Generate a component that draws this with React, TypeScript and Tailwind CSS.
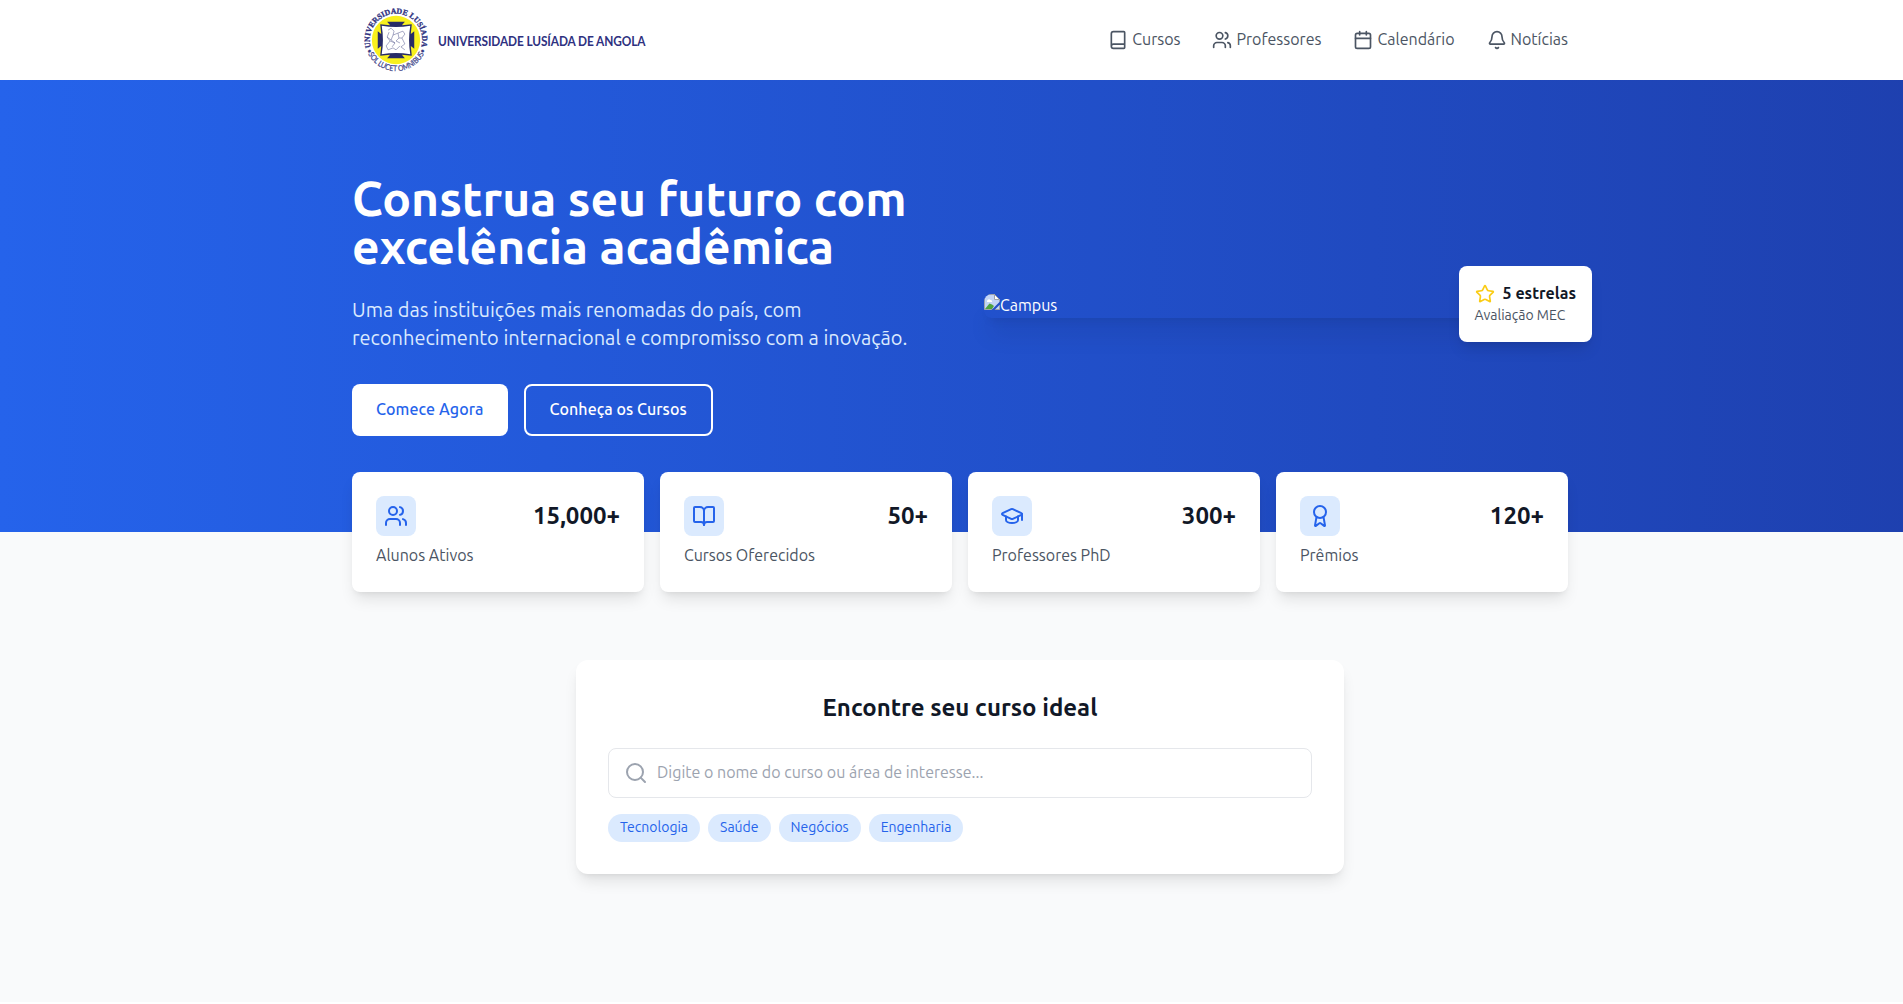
import {
  Award,
  Bell,
  Book,
  BookOpen,
  Calendar,
  GraduationCap,
  Search,
  Star,
  Users,
} from "lucide-react";

const navItems = [
  { label: "Cursos", icon: Book },
  { label: "Professores", icon: Users },
  { label: "Calendário", icon: Calendar },
  { label: "Notícias", icon: Bell },
];

const stats = [
  { label: "Alunos Ativos", value: "15,000+", icon: Users },
  { label: "Cursos Oferecidos", value: "50+", icon: BookOpen },
  { label: "Professores PhD", value: "300+", icon: GraduationCap },
  { label: "Prêmios", value: "120+", icon: Award },
];

const areas = ["Tecnologia", "Saúde", "Negócios", "Engenharia"];

function Seal() {
  return (
    <svg width="70" height="70" viewBox="-35.500 -35.500 71 71" className="shrink-0">
      <defs>
        <path id="seal-top" d="M -25.2 8.5 A 26.6 26.6 0 1 1 25.2 8.5" />
        <path id="seal-bottom" d="M -30.2 9.5 A 31.7 31.7 0 0 0 30.2 9.5" />
      </defs>
      <circle r="24.5" fill="#f8f01e" />
      <text
        fill="#2e3180"
        stroke="#2e3180"
        strokeWidth="0.3"
        fontFamily="Liberation Serif, serif"
        fontWeight="700"
        fontSize="8"
      >
        <textPath href="#seal-top" textLength="98" lengthAdjust="spacingAndGlyphs" startOffset="1">
          UNIVERSIDADE LUSÍADA
        </textPath>
      </text>
      <text
        fill="#3a3d86"
        stroke="#3a3d86"
        strokeWidth="0.2"
        fontFamily="Lato, sans-serif"
        fontSize="8"
      >
        <textPath href="#seal-bottom" textLength="78" lengthAdjust="spacingAndGlyphs" startOffset="1">
          •SOL LUCET OMNIBUS•
        </textPath>
      </text>
      <path
        d="M-9 -18.500 H9 L6 -15 L16 -16 L15 -6 L18.500 -9 V9 L15 6 L16 16 L6 15 L9 18.500 H-9 L-6 15 L-16 16 L-15 6 L-18.500 9 V-9 L-15 -6 L-16 -16 L-6 -15 Z"
        fill="#272b66"
      />
      <path
        d="M-14.500 -14.500 Q0 -12 14.500 -14.500 Q12 0 14.500 14.500 Q0 12 -14.500 14.500 Q-12 0 -14.500 -14.500 Z"
        fill="#fff"
      />
      <path
        d="M-8 -10 L-5 -12 L-2 -9 L-3 -5 L2 -7 L7 -9 L9 -6 L6 -2 L9 4 L5 7 L9 10 M-7 -8 L-9 -3 L-6 1 L-10 6 L-8 10 L-3 8 L0 10 L4 6 M-3 -5 L-5 0 L-1 3 L-4 7 M2 -7 L3 -2 L0 1 L4 3 M-6 1 L-1 3 M3 -2 L6 -2 M-9 -3 L-5 0"
        fill="none"
        stroke="#6b6e9c"
        strokeWidth="0.6"
      />
    </svg>
  );
}

function BrokenImageIcon() {
  return (
    <svg width="16" height="16" viewBox="0 0 16 16" className="shrink-0">
      <path d="M0.500 0.500 H10.500 L15.500 5.500 V15.500 H0.500 Z" fill="#c3d5f5" />
      <path d="M3 7.500 a2 2 0 0 1 3.500 -1.500 a1.500 1.500 0 0 1 1.500 2 H3 Z" fill="#fff" />
      <path d="M1 15 L5.500 9.500 L8 10.500 L10 12 L8 15 Z" fill="#4fa340" />
      <path d="M0.500 0.500 H10.500 L15.500 5.500 V15.500 H0.500 Z" fill="none" stroke="#a0a4aa" />
      <path d="M10.500 0.500 V5.500 H15.500 Z" fill="#fff" stroke="#a0a4aa" />
      <path d="M7.500 16 L16 7.500 V10.500 L10.500 16 Z" fill="#2450c8" />
    </svg>
  );
}

function Header() {
  return (
    <header className="h-20 bg-white">
      <div className="mx-auto flex h-full max-w-7xl items-center justify-between px-8">
        <div className="flex items-center pl-[9px]">
          <Seal />
          <span className="ml-[7px] mt-px origin-left scale-x-[0.91] whitespace-nowrap font-[Lato,sans-serif] text-[13px] font-bold leading-5 tracking-[-0.1px] text-[#2e3180]">
            UNIVERSIDADE LUSÍADA DE ANGOLA
          </span>
        </div>
        <nav className="flex gap-8">
          {navItems.map(({ label, icon: Icon }) => (
            <a key={label} className="flex items-center gap-1 text-[#4b5563]">
              <Icon size={20} />
              <span className="-translate-y-px">{label}</span>
            </a>
          ))}
        </nav>
      </div>
    </header>
  );
}

function Hero() {
  return (
    <section className="bg-[linear-gradient(to_right,#2563eb,#1e40af)] py-24 text-white">
      <div className="mx-auto grid max-w-7xl grid-cols-2 items-center gap-12 px-8">
        <div>
          <h1 className="mb-6 -translate-y-0.5 text-5xl font-bold leading-none">
            Construa seu futuro com excelência acadêmica
          </h1>
          <p className="mb-8 text-xl text-[#dbeafe]">
            Uma das instituições mais renomadas do país, com reconhecimento
            internacional e compromisso com a inovação.
          </p>
          <div className="flex gap-4">
            <button className="rounded-lg bg-white px-6 py-3 font-medium tracking-[0.09px] text-[#2563eb]">
              <span className="block -translate-y-px">Comece Agora</span>
            </button>
            <button className="rounded-lg border-2 border-white px-6 py-3 font-medium tracking-[0.06px]">
              <span className="block -translate-y-px">Conheça os Cursos</span>
            </button>
          </div>
        </div>
        <div className="relative">
          <div className="flex h-6 items-start overflow-hidden rounded-lg shadow-xl">
            <BrokenImageIcon />
            <span className="-translate-y-px leading-6">Campus</span>
          </div>
          <div className="absolute -bottom-6 -right-6 rounded-lg bg-white p-4 shadow-lg">
            <div className="flex items-center gap-2">
              <Star size={20} className="text-[#facc15]" />
              <span className="-translate-y-px font-semibold text-[#111827]">
                5 estrelas
              </span>
            </div>
            <p className="-translate-y-px text-sm text-[#4b5563]">Avaliação MEC</p>
          </div>
        </div>
      </div>
    </section>
  );
}

function Stats() {
  return (
    <section className="relative mx-auto -mt-[60px] grid max-w-7xl grid-cols-4 gap-4 px-8">
      {stats.map(({ label, value, icon: Icon }) => (
        <div key={label} className="h-[120px] rounded-lg bg-white p-6 shadow-lg">
          <div className="flex items-center justify-between">
            <div className="rounded-lg bg-[#dbeafe] p-2 text-[#2563eb]">
              <Icon size={24} />
            </div>
            <span className="text-2xl font-bold text-[#111827]">{value}</span>
          </div>
          <p className="mt-[7px] text-[#4b5563]">{label}</p>
        </div>
      ))}
    </section>
  );
}

function CourseSearch() {
  return (
    <section className="mx-auto mt-[68px] w-3xl rounded-xl bg-white p-8 shadow-lg">
      <h2 className="mb-6 text-center text-2xl font-bold text-[#111827]">
        Encontre seu curso ideal
      </h2>
      <div className="relative">
        <Search
          size={24}
          className="absolute left-4 top-1/2 -translate-y-1/2 text-[#9ca3af]"
        />
        <input
          placeholder="Digite o nome do curso ou área de interesse..."
          className="block h-[50px] w-full rounded-lg border border-[#e5e7eb] pb-[13px] pl-12 pr-4 pt-[11px] placeholder:text-[#9ca3af]"
        />
      </div>
      <div className="mt-4 flex gap-2">
        {areas.map((area) => (
          <span
            key={area}
            className="rounded-full bg-[#dbeafe] px-3 pb-[5px] pt-[3px] text-sm text-[#2563eb]"
          >
            {area}
          </span>
        ))}
      </div>
    </section>
  );
}

export default function App() {
  return (
    <div className="h-[1002px] w-full overflow-hidden bg-[#f9fafb] font-[Ubuntu,'Noto_Sans',sans-serif]">
      <div className="w-[1920px]">
        <Header />
        <Hero />
        <Stats />
        <CourseSearch />
      </div>
    </div>
  );
}
